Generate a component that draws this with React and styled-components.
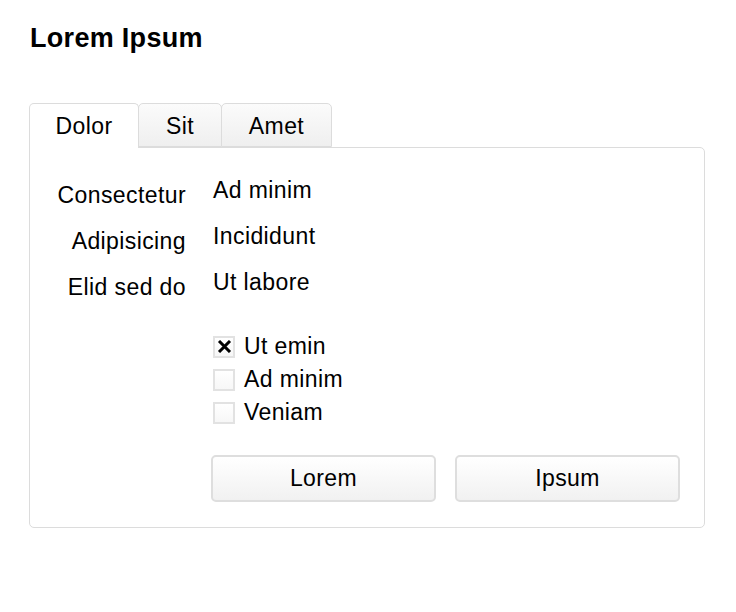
import { useState } from "react";
import styled, { createGlobalStyle } from "styled-components";

const GlobalStyle = createGlobalStyle`
  html, body {
    margin: 0;
    padding: 0;
    background: #fff;
  }
  body {
    font-family: "Liberation Sans", Arial, Helvetica, sans-serif;
    color: #000;
  }
`;

const Page = styled.div`
  width: 676px;
  padding: 23px 29px 40px;
`;

const Title = styled.h1`
  margin: 0 0 50px 1px;
  font-size: 27px;
  line-height: 30px;
  font-weight: bold;
  letter-spacing: 0.3px;
`;

const TabBar = styled.div`
  display: flex;
  position: relative;
  z-index: 1;
`;

const Tab = styled.button`
  font-family: inherit;
  font-size: 23px;
  letter-spacing: 0.4px;
  line-height: 43px;
  width: ${(p) => p.$w}px;
  height: ${(p) => (p.$active ? "45px" : "44px")};
  padding: 1px 0 0;
  margin: 0 0 ${(p) => (p.$active ? "-1px" : "0")} -1px;
  color: #000;
  border: 1px solid #dcdcdc;
  border-bottom: ${(p) => (p.$active ? "none" : "1px solid #dcdcdc")};
  border-radius: 5px 5px 0 0;
  background: ${(p) =>
    p.$active ? "#fff" : "linear-gradient(#fbfbfb, #efefef)"};
  cursor: pointer;
  box-sizing: border-box;
  &:first-child {
    margin-left: 0;
  }
`;

const Panel = styled.div`
  border: 1px solid #dcdcdc;
  border-radius: 0 5px 5px 5px;
  padding: 27px 24px 25px 20px;
  display: grid;
  grid-template-columns: 136px 1fr;
  column-gap: 27px;
  font-size: 23px;
  letter-spacing: 0.4px;
`;

const Label = styled.div`
  text-align: right;
  line-height: 30px;
  padding-top: 5px;
  margin-bottom: 11px;
`;

const Value = styled.div`
  line-height: 30px;
  margin-bottom: 16px;
`;

const Checks = styled.div`
  grid-column: 2;
  margin-top: 17px;
  display: flex;
  flex-direction: column;
`;

const CheckRow = styled.label`
  display: flex;
  align-items: center;
  gap: 9px;
  height: 33px;
  line-height: 33px;
  cursor: pointer;
`;

const Box = styled.span`
  width: 22px;
  height: 22px;
  box-sizing: border-box;
  border: 2px solid #e2e2e2;
  background: linear-gradient(#ffffff, #f7f7f7);
  display: flex;
  align-items: center;
  justify-content: center;
`;

const Buttons = styled.div`
  grid-column: 2;
  margin: 26px 0 0 -2px;
  display: grid;
  grid-template-columns: 1fr 1fr;
  gap: 19px;
`;

const Button = styled.button`
  font-family: inherit;
  font-size: 23px;
  letter-spacing: 0.4px;
  height: 47px;
  color: #000;
  border: 2px solid #dedede;
  border-radius: 5px;
  background: linear-gradient(#ffffff, #f1f1f1);
  cursor: pointer;
`;

const tabs = [
  { name: "Dolor", w: 110 },
  { name: "Sit", w: 84 },
  { name: "Amet", w: 111 },
];

const rows = [
  ["Consectetur", "Ad minim"],
  ["Adipisicing", "Incididunt"],
  ["Elid sed do", "Ut labore"],
];

const options = ["Ut emin", "Ad minim", "Veniam"];

export default function App() {
  const [tab, setTab] = useState(0);
  const [checked, setChecked] = useState([true, false, false]);

  const toggle = (i) =>
    setChecked((c) => c.map((v, j) => (j === i ? !v : v)));

  return (
    <>
      <GlobalStyle />
      <Page>
        <Title>Lorem Ipsum</Title>
        <TabBar>
          {tabs.map((t, i) => (
            <Tab
              key={t.name}
              $w={t.w}
              $active={tab === i}
              onClick={() => setTab(i)}
            >
              {t.name}
            </Tab>
          ))}
        </TabBar>
        <Panel>
          {rows.map(([l, v]) => (
            <>
              <Label key={l}>{l}</Label>
              <Value key={v}>{v}</Value>
            </>
          ))}
          <Checks>
            {options.map((o, i) => (
              <CheckRow key={o} onClick={() => toggle(i)}>
                <Box>
                  {checked[i] && (
                    <svg width="15" height="13" viewBox="0 0 15 13">
                      <path
                        d="M2 1 L13 12 M13 1 L2 12"
                        stroke="#000"
                        strokeWidth="3"
                        fill="none"
                      />
                    </svg>
                  )}
                </Box>
                {o}
              </CheckRow>
            ))}
          </Checks>
          <Buttons>
            <Button>Lorem</Button>
            <Button>Ipsum</Button>
          </Buttons>
        </Panel>
      </Page>
    </>
  );
}
